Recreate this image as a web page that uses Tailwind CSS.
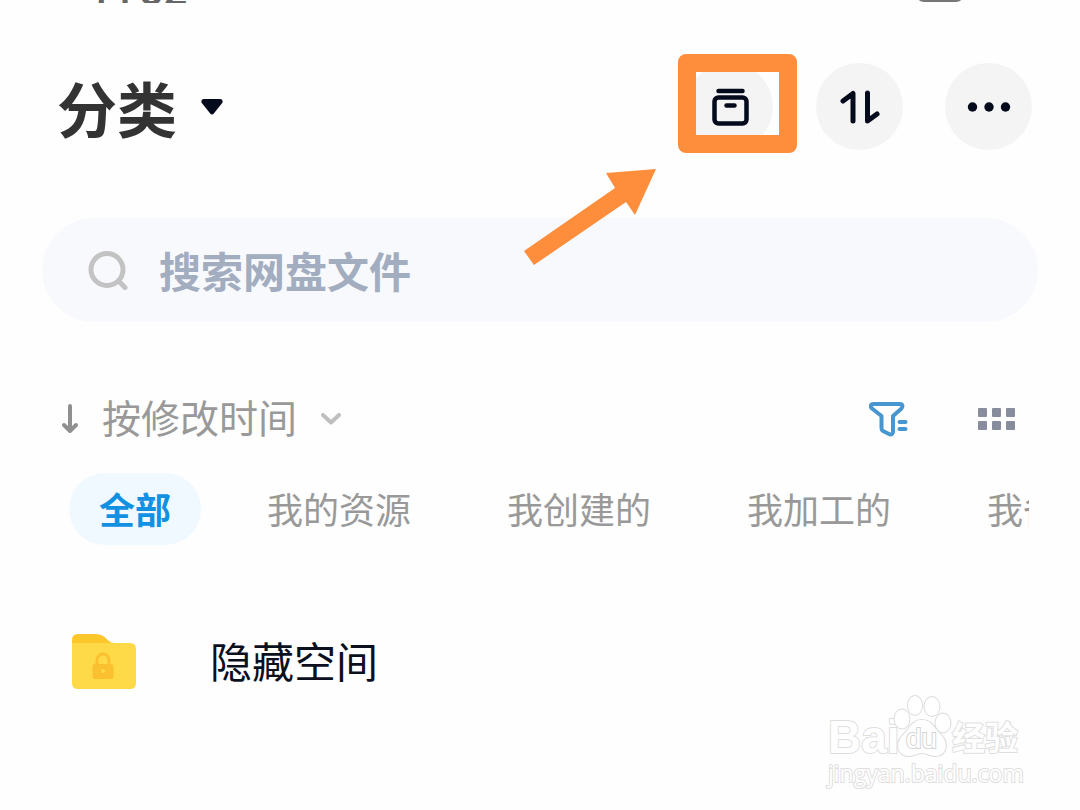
<!DOCTYPE html>
<html lang="zh-CN">
<head>
<meta charset="utf-8">
<meta name="viewport" content="width=device-width, initial-scale=1">
<title>分类</title>
<script src="https://cdn.jsdelivr.net/npm/@tailwindcss/browser@4"></script>
</head>
<body class="relative min-h-screen overflow-x-hidden bg-[#fefefe] font-['Noto_Sans_CJK_SC',sans-serif]">
  <!-- status bar, scrolled almost out of view -->
  <div class="flex h-[3px] items-end justify-between overflow-hidden pl-[88px] pr-[116px] text-[#666]" aria-hidden="true">
    <div class="flex h-[12px] items-end gap-1 font-['Roboto',sans-serif] text-[42px] font-medium leading-[24px]"><span>11</span><span>32</span></div>
    <div class="mb-px h-[26px] w-[48px] rounded-lg border-2 border-[#777]"></div>
  </div>

  <header class="flex items-center justify-between pl-[57px] pr-12 pt-[60px]">
    <button type="button" class="flex items-center gap-6">
      <h1 class="text-[60px] font-bold leading-[87px] text-[#333]">分类</h1>
      <svg class="h-4 w-[22px]" viewBox="0 0 22 16" fill="#030a1c"><path d="M3 0H19C21.5 0 22.4 2.500 21 4.200L13 14.200C12 15.800 10 15.800 9 14.200L1 4.200C-.4 2.500 .5 0 3 0Z"/></svg>
    </button>
    <div class="flex gap-[42px]">
      <div class="relative mr-px">
        <button type="button" aria-label="归档" class="flex size-[87px] items-center justify-center rounded-full bg-[#f4f4f4]">
          <svg class="size-10" viewBox="0 0 40 40" fill="none" stroke="#030a1c" stroke-width="4.500" stroke-linecap="round" stroke-linejoin="round"><path d="M8.500 4H32.500"/><rect x="4.500" y="10.500" width="32" height="26" rx="4"/><path d="M16.500 18.500H24.500"/></svg>
        </button>
        <div class="absolute -left-2 -top-[9px] h-[99px] w-[119px] rounded-lg border-[18px] border-[#ff8e3c]"></div>
        <svg class="absolute -left-[162px] top-[106px] z-10 h-[96px] w-[132px]" viewBox="0 0 132 96" fill="#ff8e3c"><path d="M132 0L82 4L91 19L0 82L10 96L102 33L111 46Z"/></svg>
      </div>
      <button type="button" aria-label="排序" class="flex size-[87px] items-center justify-center rounded-full bg-[#f4f4f4]">
        <svg class="size-10" viewBox="0 0 40 40" fill="none" stroke="#030a1c" stroke-width="5" stroke-linecap="round" stroke-linejoin="round"><path d="M3 14L13 6.500V34M27.500 6V34L37 27"/></svg>
      </button>
      <button type="button" aria-label="更多" class="flex size-[87px] items-center justify-center rounded-full bg-[#f4f4f4]">
        <svg class="h-10 w-11" viewBox="0 0 44 40" fill="#030a1c"><circle cx="5.500" cy="20" r="4.700"/><circle cx="22" cy="20" r="4.700"/><circle cx="38.500" cy="20" r="4.700"/></svg>
      </button>
    </div>
  </header>

  <main>
    <label class="mx-[42px] mt-[68px] flex h-[104px] items-center gap-[31px] rounded-full bg-[#f8f9fd] pl-[46px] pr-10">
      <svg class="size-10 shrink-0" viewBox="0 0 40 40" fill="none" stroke="#c3c3c3" stroke-width="5" stroke-linecap="round"><circle cx="19" cy="19.500" r="16"/><path d="M31 31.500L37 37.500"/></svg>
      <input type="search" aria-label="搜索网盘文件" placeholder="搜索网盘文件" class="h-16 min-w-0 flex-1 bg-transparent pb-0.5 text-[42px] font-bold text-[#555] outline-none placeholder:text-[#a2adc0]">
    </label>

    <div class="mt-[67px] flex h-[60px] items-center justify-between pl-[60px] pr-16">
      <button type="button" class="flex items-center text-[39px] leading-[56px] text-[#999]">
        <svg class="mr-[22px] h-[30px] w-5" viewBox="0 0 20 30" fill="none" stroke="#909090" stroke-width="4" stroke-linecap="round" stroke-linejoin="round"><path d="M10 2V27M4 21L10 27L16 21"/></svg>
        <span class="pb-1.5">按修改时间</span>
        <svg class="ml-6 h-3 w-5" viewBox="0 0 20 12" fill="none" stroke="#bfbfbf" stroke-width="4" stroke-linecap="round" stroke-linejoin="round"><path d="M2 2L10 9.500L18 2"/></svg>
      </button>
      <div class="flex items-center gap-[70px]">
        <button type="button" aria-label="筛选">
          <svg class="h-[35px] w-[39px]" viewBox="0 0 39 35" fill="none" stroke="#4896cf" stroke-width="4" stroke-linecap="round" stroke-linejoin="round"><path d="M4 2H31C34 2 34 5 32 7L24 14V30C24 32 22 33 20 32L14 29C13 28.500 12.500 27.500 12.500 26V14L3 6.500C1 4.500 1.500 2 4 2Z"/><path d="M30.500 20H36.500M30.500 27H36.500"/></svg>
        </button>
        <button type="button" aria-label="网格视图">
          <svg class="h-[22px] w-[38px]" viewBox="0 0 38 22" fill="#888d9e"><rect width="9" height="9" rx="1"/><rect x="14" width="9" height="9" rx="1"/><rect x="28" width="9" height="9" rx="1"/><rect y="13" width="9" height="9" rx="1"/><rect x="14" y="13" width="9" height="9" rx="1"/><rect x="28" y="13" width="9" height="9" rx="1"/></svg>
        </button>
      </div>
    </div>

    <nav class="ml-[69px] mr-[51px] mt-6 flex gap-9 overflow-hidden whitespace-nowrap text-4xl text-[#999]">
      <button type="button" class="h-[72px] shrink-0 rounded-full bg-[#f0f9ff] px-[30px] pb-0.5 font-bold text-[#1290e2]">全部</button>
      <button type="button" class="h-[72px] w-[204px] shrink-0 pb-0.5">我的资源</button>
      <button type="button" class="h-[72px] w-[204px] shrink-0 pb-0.5">我创建的</button>
      <button type="button" class="h-[72px] w-[204px] shrink-0 pb-0.5">我加工的</button>
      <button type="button" class="h-[72px] w-[204px] shrink-0 pb-0.5">我备份的</button>
    </nav>

    <ul class="mt-[81px] px-[72px]">
      <li>
        <a href="#" class="flex h-[72px] items-center gap-[74px] text-[42px] leading-[60px] text-[#0b101e]">
          <svg class="h-14 w-16" viewBox="0 0 64 56"><path d="M0 6Q0 0 6 0H24C34 0 35 9 42 9V22H0Z" fill="#fdc62b"/><path d="M0 9H58Q64 9 64 15V49Q64 55 58 55H6Q0 55 0 49Z" fill="#ffda48"/><path d="M25 33V26A6 6 0 0 1 37 26V33" fill="none" stroke="#fbc02f" stroke-width="3"/><rect x="20.500" y="30" width="21" height="15" rx="2.500" fill="#fbc02f"/><circle cx="31" cy="37" r="2" fill="#ffda48"/></svg>
          <span class="pb-1">隐藏空间</span>
        </a>
      </li>
    </ul>
  </main>

  <!-- watermark -->
  <div class="absolute bottom-[21px] right-[58px] w-[194px] text-white [paint-order:stroke_fill] [-webkit-text-stroke:2px_#dedede]">
    <div class="flex h-[62px] items-end">
      <span class="w-[64px] font-['Liberation_Sans',sans-serif] text-[46px] font-bold leading-[40px]">Bai</span>
      <div class="relative h-[62px] w-[60px] shrink-0">
        <svg class="h-[62px] w-[60px]" viewBox="0 0 60 62" fill="#fff" stroke="#dcdcdc" stroke-width="2"><ellipse cx="10" cy="24" rx="7.500" ry="9.500"/><ellipse cx="23" cy="10.500" rx="7" ry="9.500"/><ellipse cx="40" cy="11.500" rx="7.500" ry="9.500"/><ellipse cx="51" cy="28" rx="7.500" ry="9.500"/><path d="M30 25C40 25 42 33 49 40C57 48 55 61 43 61C38 61 35 58 30 58C25 58 22 61 17 61C5 61 3 48 11 40C18 33 20 25 30 25Z"/></svg>
        <span class="absolute bottom-[5px] left-[14px] font-['Liberation_Sans',sans-serif] text-[28px] leading-[26px] [-webkit-text-stroke:2px_#d4d4d4]">du</span>
      </div>
      <span class="whitespace-nowrap text-[33px] font-bold leading-[42px]">经验</span>
    </div>
    <div class="font-['Open_Sans',sans-serif] text-[23px] leading-[32px]">jingyan.baidu.com</div>
  </div>
</body>
</html>
